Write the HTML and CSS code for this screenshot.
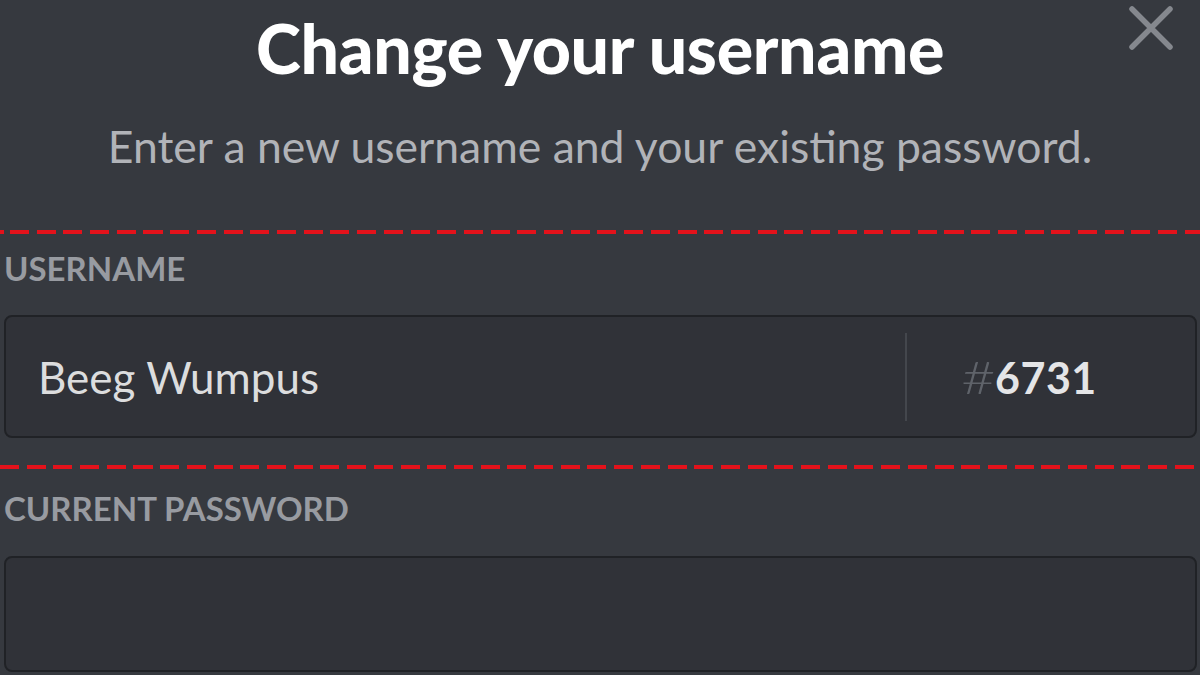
FILE: index.html
```html
<!DOCTYPE html>
<html lang="en">
<head>
<meta charset="utf-8">
<title>Change your username</title>
<link rel="stylesheet" href="styles.css">
</head>
<body>
<div class="modal">
  <header class="modal-header">
    <h1 class="title">Change your username</h1>
    <p class="subtitle">Enter a new username and your existing password.</p>
    <button class="close" aria-label="Close">
      <svg viewBox="0 0 48 48" width="48" height="48"><path d="M5 5 L43 43 M43 5 L5 43" stroke="#85888e" stroke-width="5.5" stroke-linecap="round" fill="none"/></svg>
    </button>
  </header>
  <div class="divider divider-a"></div>
  <section class="field">
    <label class="label">USERNAME</label>
    <div class="input input-username">
      <span class="value">Beeg Wumpus</span>
      <span class="sep"></span>
      <span class="discrim"><span class="hash">#</span><span class="num">6731</span></span>
    </div>
  </section>
  <div class="divider divider-b"></div>
  <section class="field">
    <label class="label label-b">CURRENT PASSWORD</label>
    <div class="input input-password"></div>
  </section>
</div>
</body>
</html>
```

FILE: styles.css
```css
html, body {
  margin: 0;
  padding: 0;
  background: #36393f;
  height: 100%;
  overflow: hidden;
}
body {
  font-family: Lato, "Open Sans", "Noto Sans", sans-serif;
}
.modal {
  position: relative;
  width: 1200px;
}
.modal-header {
  display: flex;
  flex-direction: column;
  align-items: center;
  padding-top: 8px;
}
.title {
  margin: 0;
  font-size: 68px;
  font-weight: 900;
  color: #ffffff;
  line-height: 80px;
  letter-spacing: -0.3px;
}
.subtitle {
  margin: 32px 0 0;
  font-size: 44.5px;
  line-height: 52px;
  color: #b1b3b8;
}
.close {
  position: absolute;
  top: 4px;
  right: 25px;
  padding: 0;
  border: 0;
  background: none;
  width: 48px;
  height: 48px;
}
.close svg { display: block; }
.divider {
  height: 4px;
  background-image: repeating-linear-gradient(90deg, #e3121b 0 19px, transparent 19px 26.7px);
}
.divider-a {
  margin-top: 58px;
  background-position: 10px 0;
}
.divider-b {
  margin-top: 27px;
}
.field {
  padding: 0 3px 0 4px;
}
.label {
  display: block;
  margin-top: 14px;
  font-size: 33px;
  line-height: 40px;
  font-weight: 700;
  color: #989ba1;
}
.label-b {
  margin-top: 19px;
}
.input {
  box-sizing: border-box;
  background: #303238;
  border: 2px solid #202226;
  border-radius: 8px;
}
.input-username {
  margin-top: 27px;
  height: 123px;
  display: flex;
  align-items: center;
}
.value {
  flex: 1;
  padding-left: 32px;
  font-size: 44px;
  color: #dcddde;
}
.sep {
  width: 2px;
  height: 88px;
  background: #44474d;
}
.discrim {
  width: 288px;
  box-sizing: border-box;
  display: flex;
  align-items: baseline;
  padding-left: 54px;
  font-size: 43px;
}
.hash {
  color: #5f636a;
  font-size: 46px;
  font-weight: 300;
  margin-right: 6px;
  transform: scaleX(1.3);
  transform-origin: left center;
  display: inline-block;
  width: 28px;
}
.num {
  color: #e4e5e7;
  font-weight: 700;
  letter-spacing: 0.5px;
}
.input-password {
  margin-top: 28px;
  height: 116px;
}
```
